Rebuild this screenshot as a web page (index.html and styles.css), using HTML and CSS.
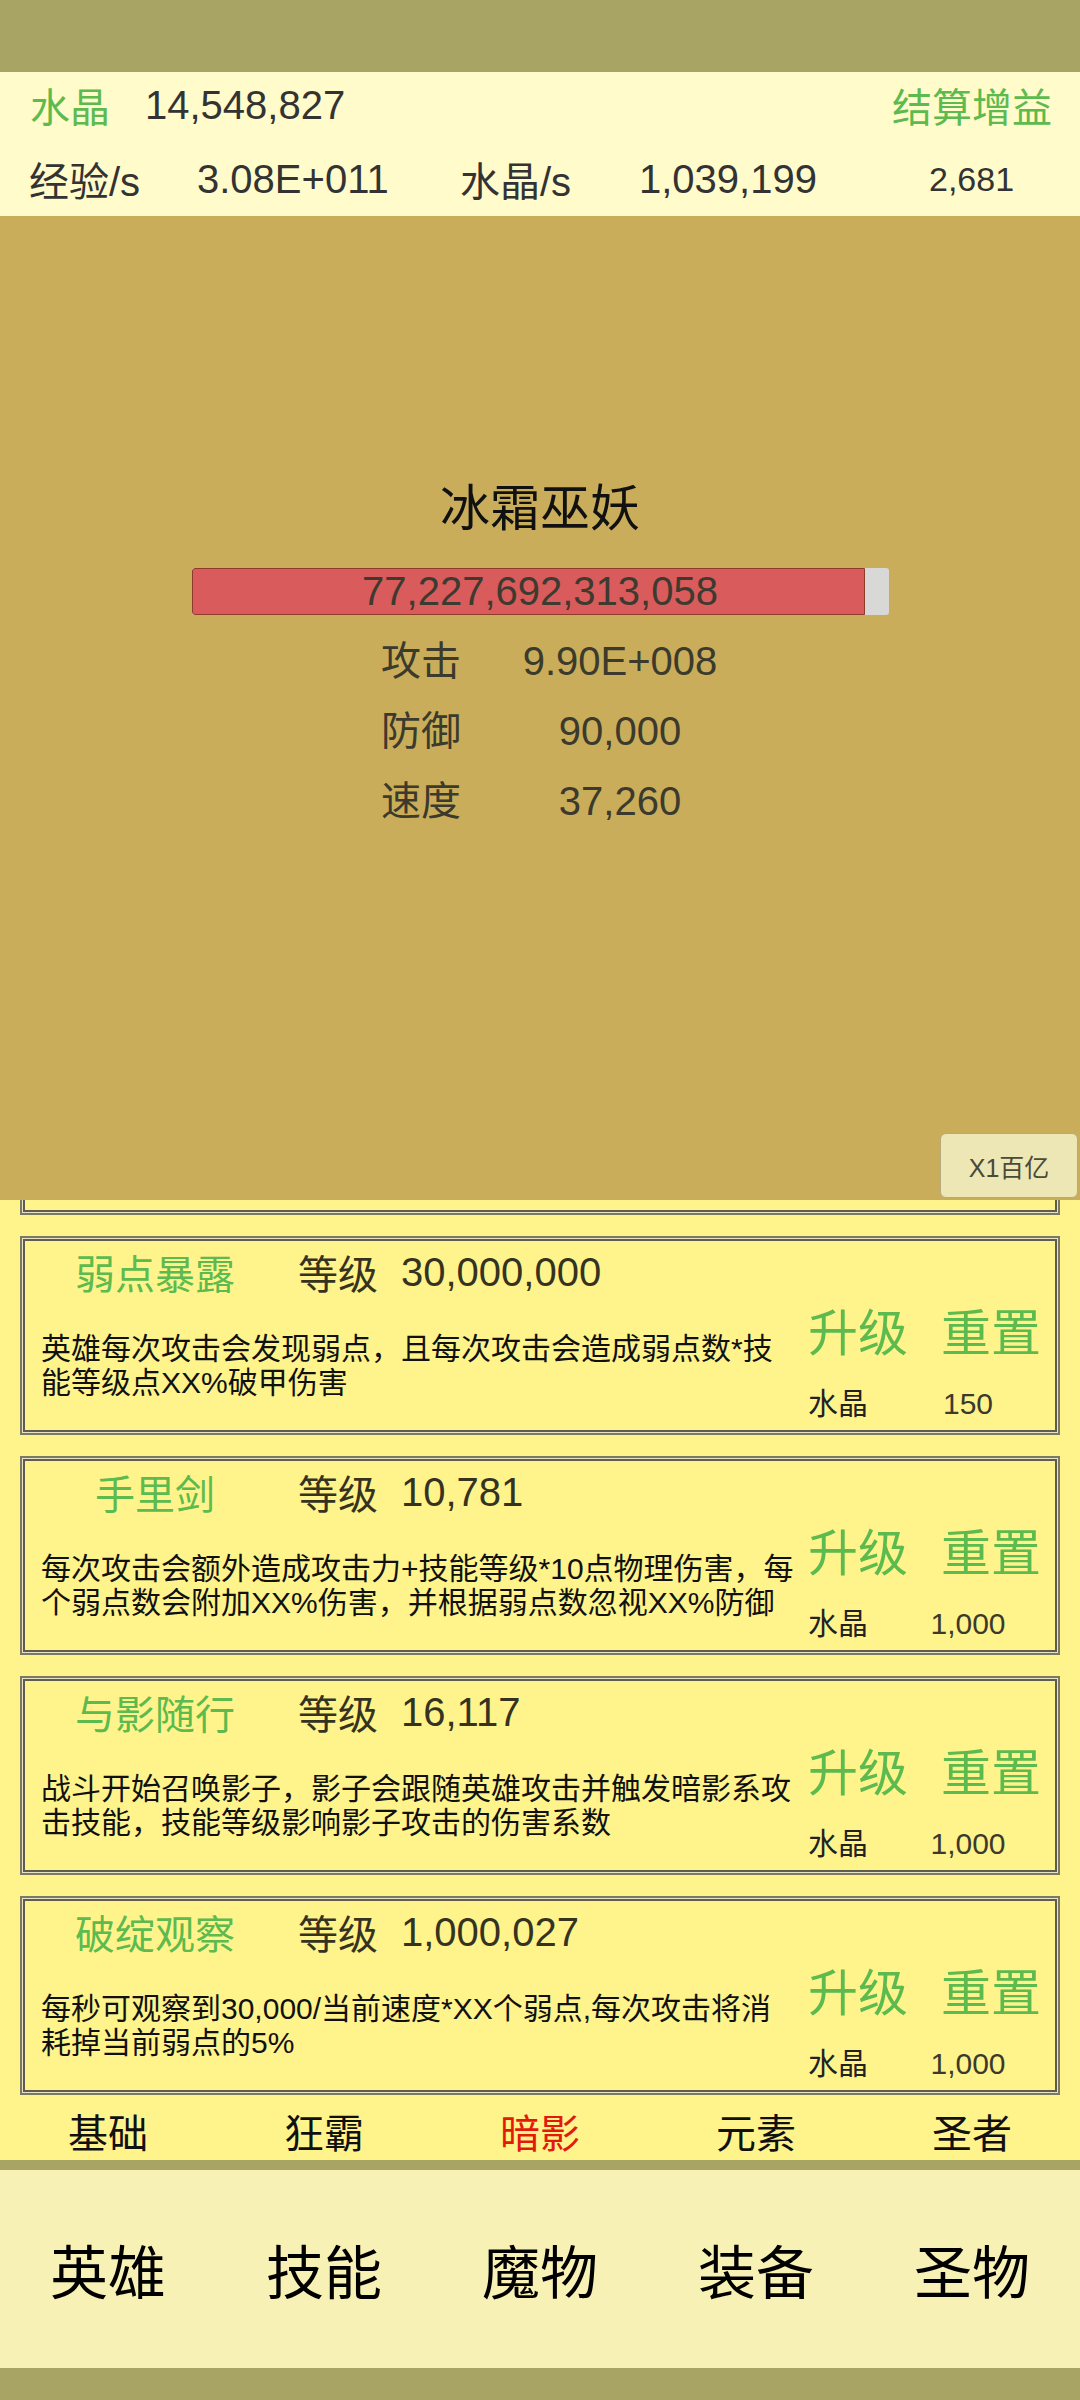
FILE: index.html
```html
<!DOCTYPE html>
<html lang="zh-CN">
<head>
    <meta charset="UTF-8">
    <meta name="viewport" content="width=device-width, initial-scale=1.0">
    <title>技能 - 暗影</title>
    <link rel="stylesheet" href="styles.css">
</head>
<body>
    <div class="topbar"></div>

    <header class="header">
        <div class="header-row row-crystal">
            <span class="hdr-crystal">水晶</span>
            <span class="hdr-crystal-num">14,548,827</span>
            <span class="hdr-settle">结算增益</span>
        </div>
        <div class="header-row row-rates">
            <span class="rate-label">经验/s</span>
            <span class="rate-exp">3.08E+011</span>
            <span class="rate-label2">水晶/s</span>
            <span class="rate-crystal">1,039,199</span>
            <span class="rate-extra">2,681</span>
        </div>
    </header>

    <section class="list-area">
        <div class="skill-scroll">
            <div class="skill-list">
                <!-- previous skill, scrolled mostly out of view -->
                <div class="card"></div>

                <div class="card">
                    <div class="skill-head">
                        <span class="skill-name">弱点暴露</span>
                        <span class="skill-lv-label">等级</span>
                        <span class="skill-lv">30,000,000</span>
                    </div>
                    <div class="skill-body">
                        <p class="skill-desc">英雄每次攻击会发现弱点，且每次攻击会造成弱点数*技<br>能等级点XX%破甲伤害</p>
                        <div class="skill-actions">
                            <div class="action-btns"><span class="btn-up">升级</span><span class="btn-reset">重置</span></div>
                            <div class="cost"><span class="cost-label">水晶</span><span class="cost-num">150</span></div>
                        </div>
                    </div>
                </div>

                <div class="card">
                    <div class="skill-head">
                        <span class="skill-name">手里剑</span>
                        <span class="skill-lv-label">等级</span>
                        <span class="skill-lv">10,781</span>
                    </div>
                    <div class="skill-body">
                        <p class="skill-desc">每次攻击会额外造成攻击力+技能等级*10点物理伤害，每<br>个弱点数会附加XX%伤害，并根据弱点数忽视XX%防御</p>
                        <div class="skill-actions">
                            <div class="action-btns"><span class="btn-up">升级</span><span class="btn-reset">重置</span></div>
                            <div class="cost"><span class="cost-label">水晶</span><span class="cost-num">1,000</span></div>
                        </div>
                    </div>
                </div>

                <div class="card">
                    <div class="skill-head">
                        <span class="skill-name">与影随行</span>
                        <span class="skill-lv-label">等级</span>
                        <span class="skill-lv">16,117</span>
                    </div>
                    <div class="skill-body">
                        <p class="skill-desc">战斗开始召唤影子，影子会跟随英雄攻击并触发暗影系攻<br>击技能，技能等级影响影子攻击的伤害系数</p>
                        <div class="skill-actions">
                            <div class="action-btns"><span class="btn-up">升级</span><span class="btn-reset">重置</span></div>
                            <div class="cost"><span class="cost-label">水晶</span><span class="cost-num">1,000</span></div>
                        </div>
                    </div>
                </div>

                <div class="card">
                    <div class="skill-head">
                        <span class="skill-name">破绽观察</span>
                        <span class="skill-lv-label">等级</span>
                        <span class="skill-lv">1,000,027</span>
                    </div>
                    <div class="skill-body">
                        <p class="skill-desc">每秒可观察到30,000/当前速度*XX个弱点,每次攻击将消<br>耗掉当前弱点的5%</p>
                        <div class="skill-actions">
                            <div class="action-btns"><span class="btn-up">升级</span><span class="btn-reset">重置</span></div>
                            <div class="cost"><span class="cost-label">水晶</span><span class="cost-num">1,000</span></div>
                        </div>
                    </div>
                </div>
            </div>
        </div>

        <nav class="tabs">
            <span>基础</span>
            <span>狂霸</span>
            <span class="tab-active">暗影</span>
            <span>元素</span>
            <span>圣者</span>
        </nav>
    </section>

    <!-- monster panel sits over the top of the skill list -->
    <section class="monster">
        <h1 class="monster-name">冰霜巫妖</h1>
        <div class="hp-bar">
            <div class="hp-fill" style="width: 96.6%"></div>
            <span class="hp-text">77,227,692,313,058</span>
        </div>
        <div class="stats">
            <span class="stat-label">攻击</span><span class="stat-val">9.90E+008</span>
            <span class="stat-label">防御</span><span class="stat-val">90,000</span>
            <span class="stat-label">速度</span><span class="stat-val">37,260</span>
        </div>
        <button class="mult-btn">X1百亿</button>
    </section>

    <div class="stripe"></div>
    <nav class="bottom-nav">
        <span>英雄</span>
        <span>技能</span>
        <span>魔物</span>
        <span>装备</span>
        <span>圣物</span>
    </nav>
    <div class="stripe-bottom"></div>
</body>
</html>
```

FILE: styles.css
```css
body {
    margin: 0;
    width: 1080px;
    height: 2400px;
    overflow: hidden;
    font-family: "Liberation Sans", "Noto Sans CJK SC", sans-serif;
    background-color: #fff48c;
    display: flex;
    flex-direction: column;
}
.topbar {
    order: -3;
    height: 72px;
    background-color: #a8a463;
}

/* header */
.header {
    order: -2;
    height: 144px;
    background-color: #fffbcb;
    color: #333;
    font-size: 40px;
}
.header-row {
    height: 72px;
    box-sizing: border-box;
    display: flex;
    align-items: center;
    white-space: nowrap;
}
.row-crystal {
    padding-bottom: 6px;
}
.row-rates {
    padding-bottom: 2px;
}
.hdr-crystal {
    color: #5cba4e;
    margin-left: 30px;
    width: 115px;
}
.hdr-settle {
    color: #5cba4e;
    margin-left: auto;
    margin-right: 28px;
}
.rate-label {
    margin-left: 29px;
    width: 168px;
}
.rate-exp {
    width: 263px;
}
.rate-label2 {
    width: 179px;
}
.rate-crystal {
    width: 290px;
}
.rate-extra {
    font-size: 34px;
}

/* monster panel */
.monster {
    order: -1;
    height: 984px;
    background-color: #c9ad5a;
    display: flex;
    flex-direction: column;
    align-items: center;
    box-sizing: border-box;
    padding-top: 263px;
}
.monster-name {
    margin: 0;
    font-size: 50px;
    line-height: 60px;
    font-weight: normal;
    color: #111;
}
.hp-bar {
    margin-top: 29px;
    width: 697px;
    height: 47px;
    box-sizing: border-box;
    background-color: #d8d8d6;
    border-radius: 3px;
    position: relative;
    overflow: hidden;
    display: flex;
    align-items: center;
    justify-content: center;
}
.hp-fill {
    position: absolute;
    left: 0;
    top: 0;
    bottom: 0;
    box-sizing: border-box;
    background-color: #d95b5b;
    border: 1px solid #8e3b2a;
    border-radius: 3px 0 0 3px;
}
.hp-text {
    position: relative;
    font-size: 40px;
    color: #3d3a30;
}
.stats {
    align-self: flex-start;
    margin-left: 381px;
    margin-top: 11px;
    display: grid;
    grid-template-columns: 120px 238px;
    line-height: 70px;
    font-size: 40px;
    color: #3b3a2c;
}
.stat-val {
    text-align: center;
}
.mult-btn {
    margin-top: auto;
    margin-bottom: 2px;
    margin-right: 2px;
    align-self: flex-end;
    width: 138px;
    height: 65px;
    background-color: #ede6b5;
    border: 1px solid #b5aa7c;
    border-radius: 6px;
    font-family: "Liberation Sans", "Noto Sans CJK SC", sans-serif;
    font-size: 25px;
    color: #4a4a3a;
}

/* skill list */
.list-area {
    height: 960px;
    background-color: #fff48c;
}
.skill-scroll {
    height: 896px;
    overflow: hidden;
}
.skill-list {
    margin-top: -184px;
}
.card {
    height: 199px;
    box-sizing: border-box;
    margin: 0 20px 21px 20px;
    border: 2px solid #7b7864;
    box-shadow: inset 0 0 0 1px #e8e3c3, inset 0 0 0 3px #5f5c50;
}
.skill-head {
    height: 68px;
    display: flex;
    align-items: center;
    font-size: 40px;
    color: #35331f;
    white-space: nowrap;
}
.skill-name {
    width: 266px;
    text-align: center;
    color: #5cba4e;
}
.skill-lv-label {
    margin-left: 10px;
    width: 80px;
}
.skill-lv {
    margin-left: 23px;
}
.skill-body {
    display: flex;
}
.skill-desc {
    margin: 26px 0 0 19px;
    width: 767px;
    font-size: 30px;
    line-height: 34px;
    color: #111;
    white-space: nowrap;
}
.skill-actions {
    width: 250px;
}
.action-btns {
    display: flex;
    gap: 33px;
    font-size: 50px;
    line-height: 56px;
    color: #5cba4e;
}
.cost {
    margin-top: 22px;
    display: flex;
    font-size: 30px;
    line-height: 40px;
    color: #222;
}
.cost-label {
    width: 90px;
}
.cost-num {
    width: 140px;
    text-align: center;
    color: #3b3a2c;
}
.tabs {
    height: 64px;
    box-sizing: border-box;
    padding-top: 6px;
    display: grid;
    grid-template-columns: repeat(5, 1fr);
    align-items: center;
    text-align: center;
    font-size: 40px;
    color: #111;
}
.tab-active {
    color: #e2190b;
}

/* bottom navigation */
.stripe {
    height: 10px;
    background-color: #a8a463;
}
.bottom-nav {
    height: 198px;
    background-color: #f8f1b5;
    display: grid;
    grid-template-columns: repeat(5, 1fr);
    align-items: center;
    text-align: center;
    font-size: 58px;
    color: #000;
}
.stripe-bottom {
    height: 32px;
    background-color: #a8a463;
}
```
